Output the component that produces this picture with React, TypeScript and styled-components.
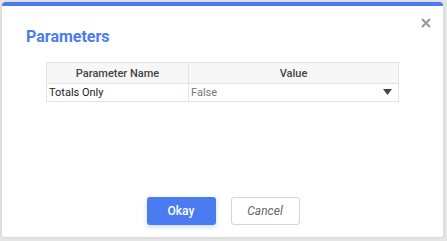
import React from "react";
import styled, { createGlobalStyle } from "styled-components";

const Global = createGlobalStyle`
  html, body { margin: 0; padding: 0; }
  body {
    background: #e6e6e6;
    font-family: Roboto, "Liberation Sans", sans-serif;
    width: 447px;
    height: 241px;
    overflow: hidden;
  }
`;

const Page = styled.div`
  padding: 2px 4px 4px 2px;
  box-sizing: border-box;
  width: 447px;
  height: 241px;
  display: flex;
`;

const Dialog = styled.div`
  position: relative;
  flex: 1;
  background: #fff;
  border-top: 4px solid #4a7cf0;
  border-radius: 4px 4px 2px 2px;
  box-shadow: 0 0 3px rgba(0, 0, 0, 0.15);
  display: flex;
  flex-direction: column;
  box-sizing: border-box;
`;

const Title = styled.h2`
  margin: 21px 0 0 24px;
  font-size: 16px;
  font-weight: 700;
  color: #4a7cf0;
  line-height: 20px;
`;

const Close = styled.button`
  position: absolute;
  top: 9px;
  right: 9px;
  width: 16px;
  height: 16px;
  padding: 0;
  border: 0;
  background: transparent;
  display: flex;
  align-items: center;
  justify-content: center;
`;

const Table = styled.table`
  margin: 15px 0 0 44px;
  width: 353px;
  border-collapse: collapse;
  font-size: 11px;
  line-height: 13px;
  table-layout: fixed;
`;

const Th = styled.th`
  background: #f7f7f7;
  border: 1px solid #e4e4e4;
  color: #444;
  font-weight: 500;
  height: 20px;
  padding: 0;
  text-align: center;
`;

const Td = styled.td<{ $muted?: boolean }>`
  border: 1px solid #e4e4e4;
  border-top: 0;
  height: 16px;
  padding: 0 6px 1px 2px;
  color: ${(p) => (p.$muted ? "#777" : "#222")};
`;

const SelectCell = styled.div`
  display: flex;
  align-items: center;
  justify-content: space-between;
`;

const Footer = styled.div`
  margin-top: auto;
  margin-bottom: 12px;
  display: flex;
  justify-content: center;
  gap: 15px;
  padding-left: 1px;
`;

const Button = styled.button<{ $primary?: boolean }>`
  width: 69px;
  height: 28px;
  border-radius: 3px;
  font-family: Roboto, "Liberation Sans", sans-serif;
  font-size: 12px;
  cursor: pointer;
  ${(p) =>
    p.$primary
      ? `background:#4a7cf0;color:#fff;border:0;font-weight:500;box-shadow:0 2px 5px rgba(74,124,240,0.3);`
      : `background:#fff;color:#666;border:1px solid #d4d4d4;font-style:italic;`}
`;

export default function App() {
  return (
    <>
      <Global />
      <Page>
        <Dialog>
          <Title>Parameters</Title>
          <Close aria-label="close">
            <svg width="10" height="10" viewBox="0 0 10 10">
              <path d="M1 1L9 9M9 1L1 9" stroke="#999" strokeWidth="2" />
            </svg>
          </Close>
          <Table>
            <colgroup>
              <col style={{ width: 142 }} />
              <col />
            </colgroup>
            <thead>
              <tr>
                <Th>Parameter Name</Th>
                <Th>Value</Th>
              </tr>
            </thead>
            <tbody>
              <tr>
                <Td>Totals Only</Td>
                <Td $muted>
                  <SelectCell>
                    <span>False</span>
                    <svg width="9" height="6" viewBox="0 0 9 6">
                      <path d="M0 0H9L4.5 6Z" fill="#3e4756" />
                    </svg>
                  </SelectCell>
                </Td>
              </tr>
            </tbody>
          </Table>
          <Footer>
            <Button $primary>Okay</Button>
            <Button>Cancel</Button>
          </Footer>
        </Dialog>
      </Page>
    </>
  );
}
